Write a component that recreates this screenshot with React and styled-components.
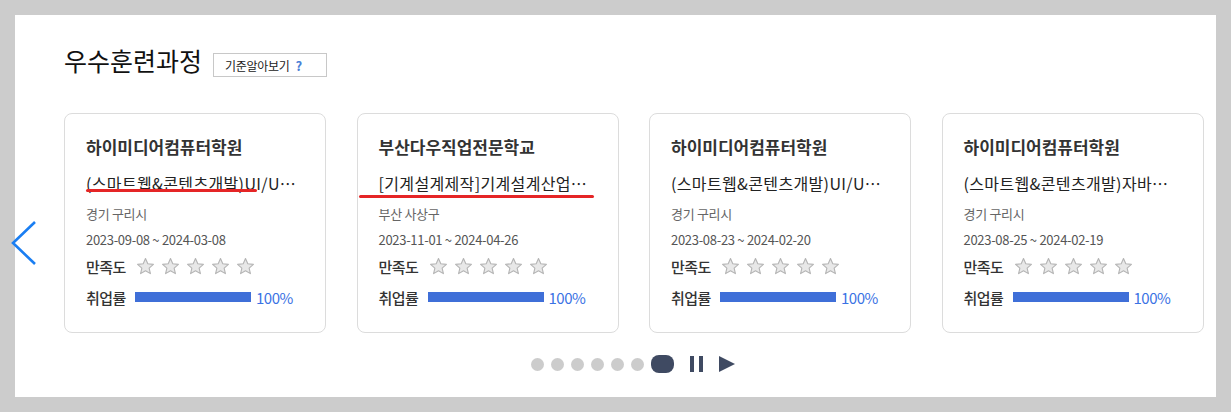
import React from 'react';
import styled, { createGlobalStyle } from 'styled-components';

const GlobalStyle = createGlobalStyle`
  html, body {
    margin: 0;
    padding: 0;
    background: #cccccc;
  }
  body {
    font-family: "Noto Sans CJK KR", "Noto Sans", sans-serif;
    color: #333;
  }
`;

const Panel = styled.section`
  position: relative;
  margin: 15px;
  height: 382px;
  box-sizing: border-box;
  background: #fff;
  padding: 29px 0 0 49px;
  overflow: hidden;
`;

const Header = styled.div`
  display: flex;
  align-items: flex-end;
  gap: 11px;
  height: 32px;
`;

const Title = styled.h2`
  margin: 0;
  font-size: 25px;
  line-height: 32px;
  font-weight: 400;
  color: #111;
`;

const GuideButton = styled.button`
  display: flex;
  align-items: center;
  gap: 6px;
  height: 24px;
  width: 114px;
  margin-bottom: -1px;
  padding: 0 0 0 11px;
  box-sizing: border-box;
  border: 1px solid #c8c8c8;
  background: #fff;
  font-family: inherit;
  font-size: 12px;
  color: #222;
  letter-spacing: -0.3px;
  cursor: pointer;

  b {
    color: #4a7fd6;
    font-size: 13px;
  }
`;

const Track = styled.div`
  display: flex;
  gap: 30.5px;
  margin-top: 37px;
`;

const Card = styled.div`
  position: relative;
  flex: 0 0 262px;
  width: 262px;
  min-width: 0;
  height: 220px;
  box-sizing: border-box;
  border: 1px solid #dcdcdc;
  border-radius: 8px;
  padding: 21px 21px 0;
`;

const School = styled.div`
  font-size: 17px;
  line-height: 24px;
  font-weight: 700;
  color: #333;
`;

const Course = styled.div`
  margin-top: 12px;
  font-size: 16px;
  line-height: 24px;
  color: #222;
  letter-spacing: 0.35px;
  white-space: nowrap;
  overflow: hidden;
  text-overflow: ellipsis;
`;

const Place = styled.div`
  margin-top: 9px;
  font-size: 13px;
  line-height: 20px;
  color: #666;
  letter-spacing: -0.3px;
`;

const Period = styled.div`
  margin-top: 6px;
  font-size: 13px;
  line-height: 20px;
  color: #555;
  letter-spacing: -0.3px;
`;

const Row = styled.div`
  display: flex;
  align-items: center;
  height: 24px;
  margin-top: ${p => p.$gap}px;
`;

const Label = styled.span`
  font-size: 15px;
  font-weight: 500;
  color: #333;
  width: 49px;
  letter-spacing: -0.5px;
`;

const Stars = styled.div`
  display: flex;
  gap: 6px;
  margin-left: 1px;
`;

const Bar = styled.div`
  width: 116px;
  height: 10px;
  background: #3f6fd8;
`;

const Percent = styled.span`
  margin-left: 5px;
  font-size: 15px;
  color: #3a72e4;
  letter-spacing: -0.5px;
`;

const Mark = styled.span`
  position: absolute;
  left: ${p => p.$left}px;
  top: ${p => p.$top}px;
  width: ${p => p.$width}px;
  height: 3px;
  background: #e52526;
  border-radius: 2px;
`;

const Pager = styled.div`
  display: flex;
  align-items: center;
  justify-content: center;
  gap: 7px;
  margin-top: 22px;
  padding-right: 13px;
`;

const Dot = styled.span`
  width: 13px;
  height: 13px;
  border-radius: 50%;
  background: #cccccc;
`;

const ActiveDot = styled.span`
  width: 23px;
  height: 18px;
  border-radius: 8px;
  background: #3f4a62;
`;

const IconButton = styled.button`
  display: flex;
  align-items: center;
  justify-content: center;
  padding: 0;
  margin-left: ${p => p.$gap}px;
  border: 0;
  background: none;
  cursor: pointer;
`;

const PrevArrow = styled.button`
  position: absolute;
  left: 9px;
  top: 220px;
  padding: 0;
  border: 0;
  background: none;
  cursor: pointer;
`;

const courses = [
  {
    school: '하이미디어컴퓨터학원',
    course: '(스마트웹&콘텐츠개발)UI/UX디자인&웹퍼블리셔',
    place: '경기 구리시',
    period: '2023-09-08 ~ 2024-03-08',
    mark: { left: 21, top: 75, width: 171 },
  },
  {
    school: '부산다우직업전문학교',
    course: '[기계설계제작]기계설계산업기사 취득과정',
    place: '부산 사상구',
    period: '2023-11-01 ~ 2024-04-26',
    mark: { left: 1, top: 81, width: 235 },
  },
  {
    school: '하이미디어컴퓨터학원',
    course: '(스마트웹&콘텐츠개발)UI/UX디자인 실무',
    place: '경기 구리시',
    period: '2023-08-23 ~ 2024-02-20',
  },
  {
    school: '하이미디어컴퓨터학원',
    course: '(스마트웹&콘텐츠개발)자바풀스택 개발자',
    place: '경기 구리시',
    period: '2023-08-25 ~ 2024-02-19',
  },
];

function Star() {
  return (
    <svg width="19" height="19" viewBox="0 0 24 24">
      <polygon
        points="12,2 14.9,8.6 22,9.3 16.6,14 18.2,21 12,17.3 5.8,21 7.4,14 2,9.3 9.1,8.6"
        fill="#e8e8e8"
        stroke="#b4b4b4"
        strokeWidth="1.4"
        strokeLinejoin="round"
      />
    </svg>
  );
}

function CourseCard({ item }) {
  return (
    <Card>
      <School>{item.school}</School>
      <Course>{item.course}</Course>
      <Place>{item.place}</Place>
      <Period>{item.period}</Period>
      <Row $gap={4}>
        <Label>만족도</Label>
        <Stars>
          {[0, 1, 2, 3, 4].map(i => <Star key={i} />)}
        </Stars>
      </Row>
      <Row $gap={7}>
        <Label>취업률</Label>
        <Bar />
        <Percent>100%</Percent>
      </Row>
      {item.mark && (
        <Mark $left={item.mark.left} $top={item.mark.top} $width={item.mark.width} />
      )}
    </Card>
  );
}

export default function App() {
  return (
    <>
      <GlobalStyle />
      <Panel>
        <Header>
          <Title>우수훈련과정</Title>
          <GuideButton>기준알아보기 <b>?</b></GuideButton>
        </Header>
        <Track>
          {courses.map((item, i) => <CourseCard key={i} item={item} />)}
        </Track>
        <Pager>
          {[0, 1, 2, 3, 4, 5].map(i => <Dot key={i} />)}
          <ActiveDot />
          <IconButton $gap={9}>
            <svg width="14" height="16" viewBox="0 0 14 16">
              <rect x="0" y="0" width="4" height="16" fill="#3f4a62" />
              <rect x="9" y="0" width="4" height="16" fill="#3f4a62" />
            </svg>
          </IconButton>
          <IconButton $gap={8}>
            <svg width="17" height="16" viewBox="0 0 17 16">
              <polygon points="0,0 16,8 0,16" fill="#3f4a62" />
            </svg>
          </IconButton>
        </Pager>
      </Panel>
      <PrevArrow aria-label="이전">
        <svg width="30" height="50" viewBox="0 0 30 50">
          <polyline points="26,2 4,23 26,44" fill="none" stroke="#1a7ef2" strokeWidth="2.6" />
        </svg>
      </PrevArrow>
    </>
  );
}
